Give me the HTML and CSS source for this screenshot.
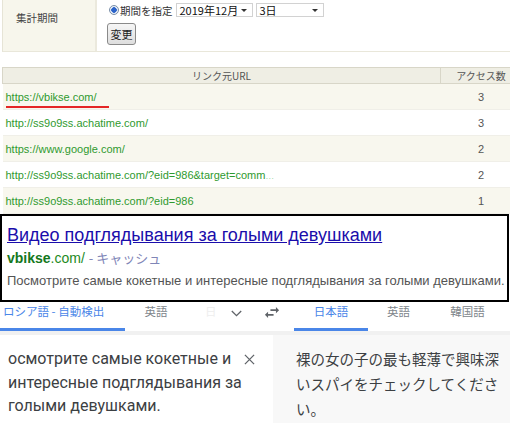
FILE: index.html
```
<!DOCTYPE html>
<html lang="ja">
<head>
  <meta charset="UTF-8">
  <title>アクセス解析</title>
  <link rel="stylesheet" href="styles.css">
</head>
<body>
  <div class="cond">
    <div class="cond-label">集計期間</div>
    <div class="cond-body">
      <div class="cond-line">
        <span class="radio"></span>
        <span class="radio-text">期間を指定</span>
        <span class="select month">2019年12月<span class="arrow"></span></span>
        <span class="select day">3日<span class="arrow"></span></span>
      </div>
      <button class="change">変更</button>
    </div>
  </div>

  <table class="ref">
    <tr>
      <th class="url-col">リンク元URL</th>
      <th class="num-col">アクセス数</th>
    </tr>
    <tr class="odd">
      <td><span class="url marked">https://vbikse.com/</span></td>
      <td class="num">3</td>
    </tr>
    <tr>
      <td><span class="url">http://ss9o9ss.achatime.com/</span></td>
      <td class="num">3</td>
    </tr>
    <tr class="odd">
      <td><span class="url">https://www.google.com/</span></td>
      <td class="num">2</td>
    </tr>
    <tr>
      <td><span class="url">http://ss9o9ss.achatime.com/?eid=986&amp;target=comm</span><span class="dots">…</span></td>
      <td class="num">2</td>
    </tr>
    <tr class="odd">
      <td><span class="url">http://ss9o9ss.achatime.com/?eid=986</span></td>
      <td class="num">1</td>
    </tr>
  </table>

  <div class="serp">
    <a class="serp-title" href="#">Видео подглядывания за голыми девушками</a>
    <div class="serp-cite"><b>vbikse</b>.com/ <span class="cache">- キャッシュ</span></div>
    <div class="serp-desc">Посмотрите самые кокетные и интересные подглядывания за голыми девушками.</div>
  </div>

  <div class="tr">
    <div class="tr-tabs">
      <div class="tab t-src active">ロシア語 - 自動検出</div>
      <div class="tab t-en">英語</div>
      <div class="tab t-fade">日</div>
      <div class="tab icon t-more">
        <svg width="11" height="7" viewBox="0 0 11 7"><path d="M0.8 1l4.7 4.6L10.2 1" fill="none" stroke="#5f6368" stroke-width="1.3"/></svg>
      </div>
      <div class="tab icon t-swap">
        <svg width="16" height="11" viewBox="3 5 18 14"><path d="M6.99 11L3 15l3.99 4v-3H14v-2H6.99v-3zM21 9l-3.99-4v3H10v2h7.01v3L21 9z" fill="#5f6368"/></svg>
      </div>
      <div class="tab t-ja active">日本語</div>
      <div class="tab t-en2">英語</div>
      <div class="tab t-ko">韓国語</div>
    </div>
    <div class="tr-body">
      <div class="tr-src">
        <div class="src-text">осмотрите самые кокетные и<br>интересные подглядывания за<br>голыми девушками.</div>
        <svg class="close" width="11" height="11" viewBox="0 0 12 12"><path d="M1 1l10 10M11 1L1 11" stroke="#5f6368" stroke-width="1.4"/></svg>
      </div>
      <div class="tr-out">裸の女の子の最も軽薄で興味深<br>いスパイをチェックしてくださ<br>い。</div>
    </div>
  </div>
</body>
</html>
```

FILE: styles.css
```
body {
  margin: 0;
  width: 510px;
  height: 423px;
  overflow: hidden;
  background: #fff;
  font-family: "Liberation Sans", Arial, "Noto Sans CJK JP", sans-serif;
}

/* 集計期間 */
.cond {
  display: flex;
  height: 51px;
  margin-left: 2px;
  border-left: 1px solid #e6e4d6;
  border-bottom: 1px solid #e9e7da;
}
.cond-label {
  width: 94px;
  box-sizing: border-box;
  background: #f7f6ec;
  border-right: 2px solid #ebe9dd;
  color: #444;
  font-family: "Noto Sans CJK JP", sans-serif;
  font-size: 10.5px;
  padding: 10px 0 0 13px;
}
.cond-body {
  padding: 3px 0 0 10px;
}
.cond-line {
  display: flex;
  align-items: center;
  height: 14px;
  font-family: "Noto Sans CJK JP", sans-serif;
  font-size: 10.5px;
  color: #333;
}
.radio {
  width: 8px;
  height: 8px;
  border-radius: 50%;
  border: 1px solid #7a8fa8;
  background: radial-gradient(circle, #2b63c9 0 2.5px, #e8eef7 3px);
  margin: 0 1px 0 2px;
}
.radio-text {
  margin-right: 3px;
}
.select {
  position: relative;
  height: 14px;
  border: 1px solid #d2d2d2;
  box-sizing: border-box;
  font-size: 11px;
  line-height: 12px;
  color: #111;
  padding-left: 3px;
}
.month { width: 77px; }
.day { width: 68px; margin-left: 3px; }
.arrow {
  position: absolute;
  right: 5px;
  top: 5px;
  border: 3px solid transparent;
  border-top: 3px solid #333;
  border-bottom: 0;
}
.change {
  margin-top: 6px;
  width: 29px;
  height: 22px;
  padding: 0;
  border: 1px solid #8a8a8a;
  border-radius: 3px;
  background: linear-gradient(#f6f6f6, #dedede);
  font-family: "Noto Sans CJK JP", sans-serif;
  font-size: 11px;
  color: #222;
}

/* リンク元 */
.ref {
  margin: 15px 0 0 2px;
  width: 520px;
  border-collapse: collapse;
  font-size: 11px;
}
.ref th {
  height: 15px;
  padding: 0;
  background: #efeee4;
  border: 1px solid #d8d6c8;
  font-family: "Noto Sans CJK JP", sans-serif;
  font-weight: normal;
  font-size: 10px;
  color: #555;
}
.url-col { width: 437px; }
.ref td {
  height: 25px;
  padding: 0 0 0 3px;
  border-bottom: 1px solid #f0efe8;
}
.ref tr.odd td {
  background: #f8f7ee;
}
.url {
  color: #2f9a2f;
}
.marked {
  display: inline-block;
  position: relative;
}
.marked::after {
  content: "";
  position: absolute;
  left: 0;
  right: -12px;
  bottom: -5px;
  height: 2px;
  background: #e42626;
}
.dots {
  color: #a9d7a9;
  font-size: 9px;
}
.ref td.num {
  text-align: center;
  color: #555;
  padding: 0;
}

/* 検索結果 */
.serp {
  margin-right: 1px;
  border: 2px solid #000;
  padding: 7px 0 9px 5px;
}
.serp-title {
  display: block;
  font-size: 18px;
  line-height: 24px;
  color: #1a0dab;
}
.serp-cite {
  font-size: 14px;
  line-height: 20px;
  color: #1e8a1e;
  margin-top: 1px;
}
.serp-cite b {
  color: #14781c;
}
.cache {
  color: #7f86b7;
  font-family: "Noto Sans CJK JP", sans-serif;
  font-size: 13px;
}
.serp-desc {
  font-size: 13px;
  line-height: 20px;
  color: #545454;
  margin-top: 3px;
}

/* 翻訳 */
.tr {
  font-family: Roboto, "Noto Sans CJK JP", sans-serif;
}
.tr-tabs {
  display: flex;
  height: 29px;
  border-bottom: 4px solid #f1f1f1;
}
.tab {
  box-sizing: border-box;
  height: 29px;
  padding-top: 1px;
  font-family: "Noto Sans CJK JP", sans-serif;
  font-size: 11.5px;
  color: #80868b;
  text-align: center;
}
.tab.active {
  color: #4a86e8;
  border-bottom: 3px solid #4a86e8;
}
.tab.icon {
  display: flex;
  justify-content: center;
  align-items: flex-start;
}
.t-src { width: 125px; text-align: left; padding-left: 3px; }
.t-en { width: 62px; }
.t-fade { width: 35px; text-align: left; padding-left: 18px; color: #eeeeee; }
.t-more { width: 28px; padding-top: 8px; }
.t-swap { width: 44px; padding-top: 5px; }
.t-ja { width: 74px; }
.t-en2 { width: 61px; }
.t-ko { width: 77px; }
.tr-body {
  display: flex;
  height: 90px;
}
.tr-src {
  width: 273px;
  display: flex;
  justify-content: space-between;
  padding: 12px 0 0 8px;
  box-sizing: border-box;
}
.src-text {
  font-size: 16px;
  line-height: 23.5px;
  color: #3c4043;
  white-space: nowrap;
}
.close {
  margin: 7px 18px 0 0;
}
.tr-out {
  flex: 1;
  background: #f8f8f8;
  padding: 11px 0 0 23px;
  font-family: "Noto Sans CJK JP", sans-serif;
  font-size: 14.5px;
  line-height: 25px;
  color: #3c4043;
  white-space: nowrap;
}
```
